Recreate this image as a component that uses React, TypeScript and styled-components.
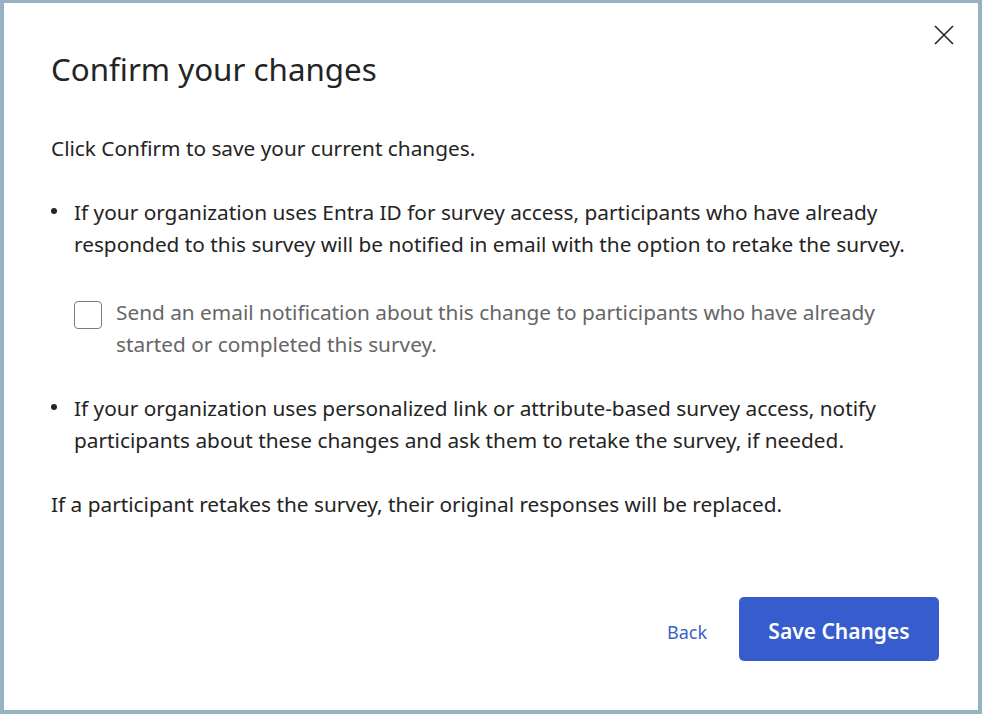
import React from "react";
import styled, { createGlobalStyle } from "styled-components";

const Global = createGlobalStyle`
  html, body { margin: 0; padding: 0; background: #ffffff; }
  * { box-sizing: border-box; }
`;

const Frame = styled.div`
  width: 982px;
  height: 714px;
  border: 4px solid #97b3c1;
  border-top-width: 3px;
  background: #ffffff;
  display: flex;
  flex-direction: column;
  font-family: "Noto Sans", "Open Sans", sans-serif;
  color: #242424;
  position: relative;
`;

const CloseButton = styled.button`
  position: absolute;
  top: 19px;
  right: 21px;
  width: 26px;
  height: 26px;
  padding: 0;
  border: none;
  background: transparent;
  display: flex;
  align-items: center;
  justify-content: center;
  cursor: pointer;
`;

const Body = styled.div`
  flex: 1;
  padding: 46px 39px 0 47px;
  display: flex;
  flex-direction: column;
`;

const Title = styled.h1`
  margin: 0;
  font-size: 31.3px;
  font-weight: 400;
  line-height: 40px;
  color: #242424;
`;

const Paragraph = styled.p<{ $top: number }>`
  margin: ${(p) => p.$top}px 0 0 0;
  font-size: 20.8px;
  line-height: 32px;
  color: #242424;
`;

const BulletList = styled.ul`
  list-style: none;
  margin: 32px 0 0 0;
  padding: 0;
  display: flex;
  flex-direction: column;
  gap: 32px;
`;

const Bullet = styled.li`
  position: relative;
  padding-left: 23px;
  font-size: 20.8px;
  line-height: 32px;
  &::before {
    content: "";
    position: absolute;
    left: 0;
    top: 12px;
    width: 6px;
    height: 6px;
    border-radius: 50%;
    background: #242424;
  }
`;

const CheckRow = styled.label`
  display: flex;
  align-items: flex-start;
  gap: 14px;
  margin: 36px 0 0 0;
  color: #666666;
  font-size: 20.8px;
  line-height: 32px;
  cursor: pointer;
`;

const Box = styled.span`
  flex: none;
  width: 28px;
  height: 28px;
  margin-top: 5px;
  border: 1.5px solid #7a7a7a;
  border-radius: 4px;
  background: #ffffff;
`;

const Footer = styled.div`
  display: flex;
  justify-content: flex-end;
  align-items: center;
  gap: 32px;
  padding: 0 39px 49px 0;
`;

const LinkButton = styled.button`
  border: none;
  background: transparent;
  color: #3a5fc8;
  font-family: inherit;
  font-size: 18px;
  padding: 6px 0 0 0;
  cursor: pointer;
`;

const PrimaryButton = styled.button`
  width: 200px;
  height: 64px;
  padding: 4px 0 0 0;
  border: none;
  border-radius: 5px;
  background: #365ccd;
  color: #ffffff;
  font-family: inherit;
  font-size: 21px;
  font-weight: 600;
  cursor: pointer;
`;

export default function App() {
  return (
    <>
      <Global />
      <Frame>
        <CloseButton aria-label="Close">
          <svg width="20" height="20" viewBox="0 0 20 20">
            <path d="M1 1 L19 19 M19 1 L1 19" stroke="#242424" strokeWidth="1.6" fill="none" />
          </svg>
        </CloseButton>
        <Body>
          <Title>Confirm your changes</Title>
          <Paragraph $top={43}>Click Confirm to save your current changes.</Paragraph>
          <BulletList>
            <Bullet>
              If your organization uses Entra ID for survey access, participants who have already
              <br />
              responded to this survey will be notified in email with the option to retake the survey.
              <CheckRow>
                <Box />
                <span>
                  Send an email notification about this change to participants who have already
                  <br />
                  started or completed this survey.
                </span>
              </CheckRow>
            </Bullet>
            <Bullet>
              If your organization uses personalized link or attribute-based survey access, notify
              <br />
              participants about these changes and ask them to retake the survey, if needed.
            </Bullet>
          </BulletList>
          <Paragraph $top={32}>
            If a participant retakes the survey, their original responses will be replaced.
          </Paragraph>
        </Body>
        <Footer>
          <LinkButton>Back</LinkButton>
          <PrimaryButton>Save Changes</PrimaryButton>
        </Footer>
      </Frame>
    </>
  );
}
